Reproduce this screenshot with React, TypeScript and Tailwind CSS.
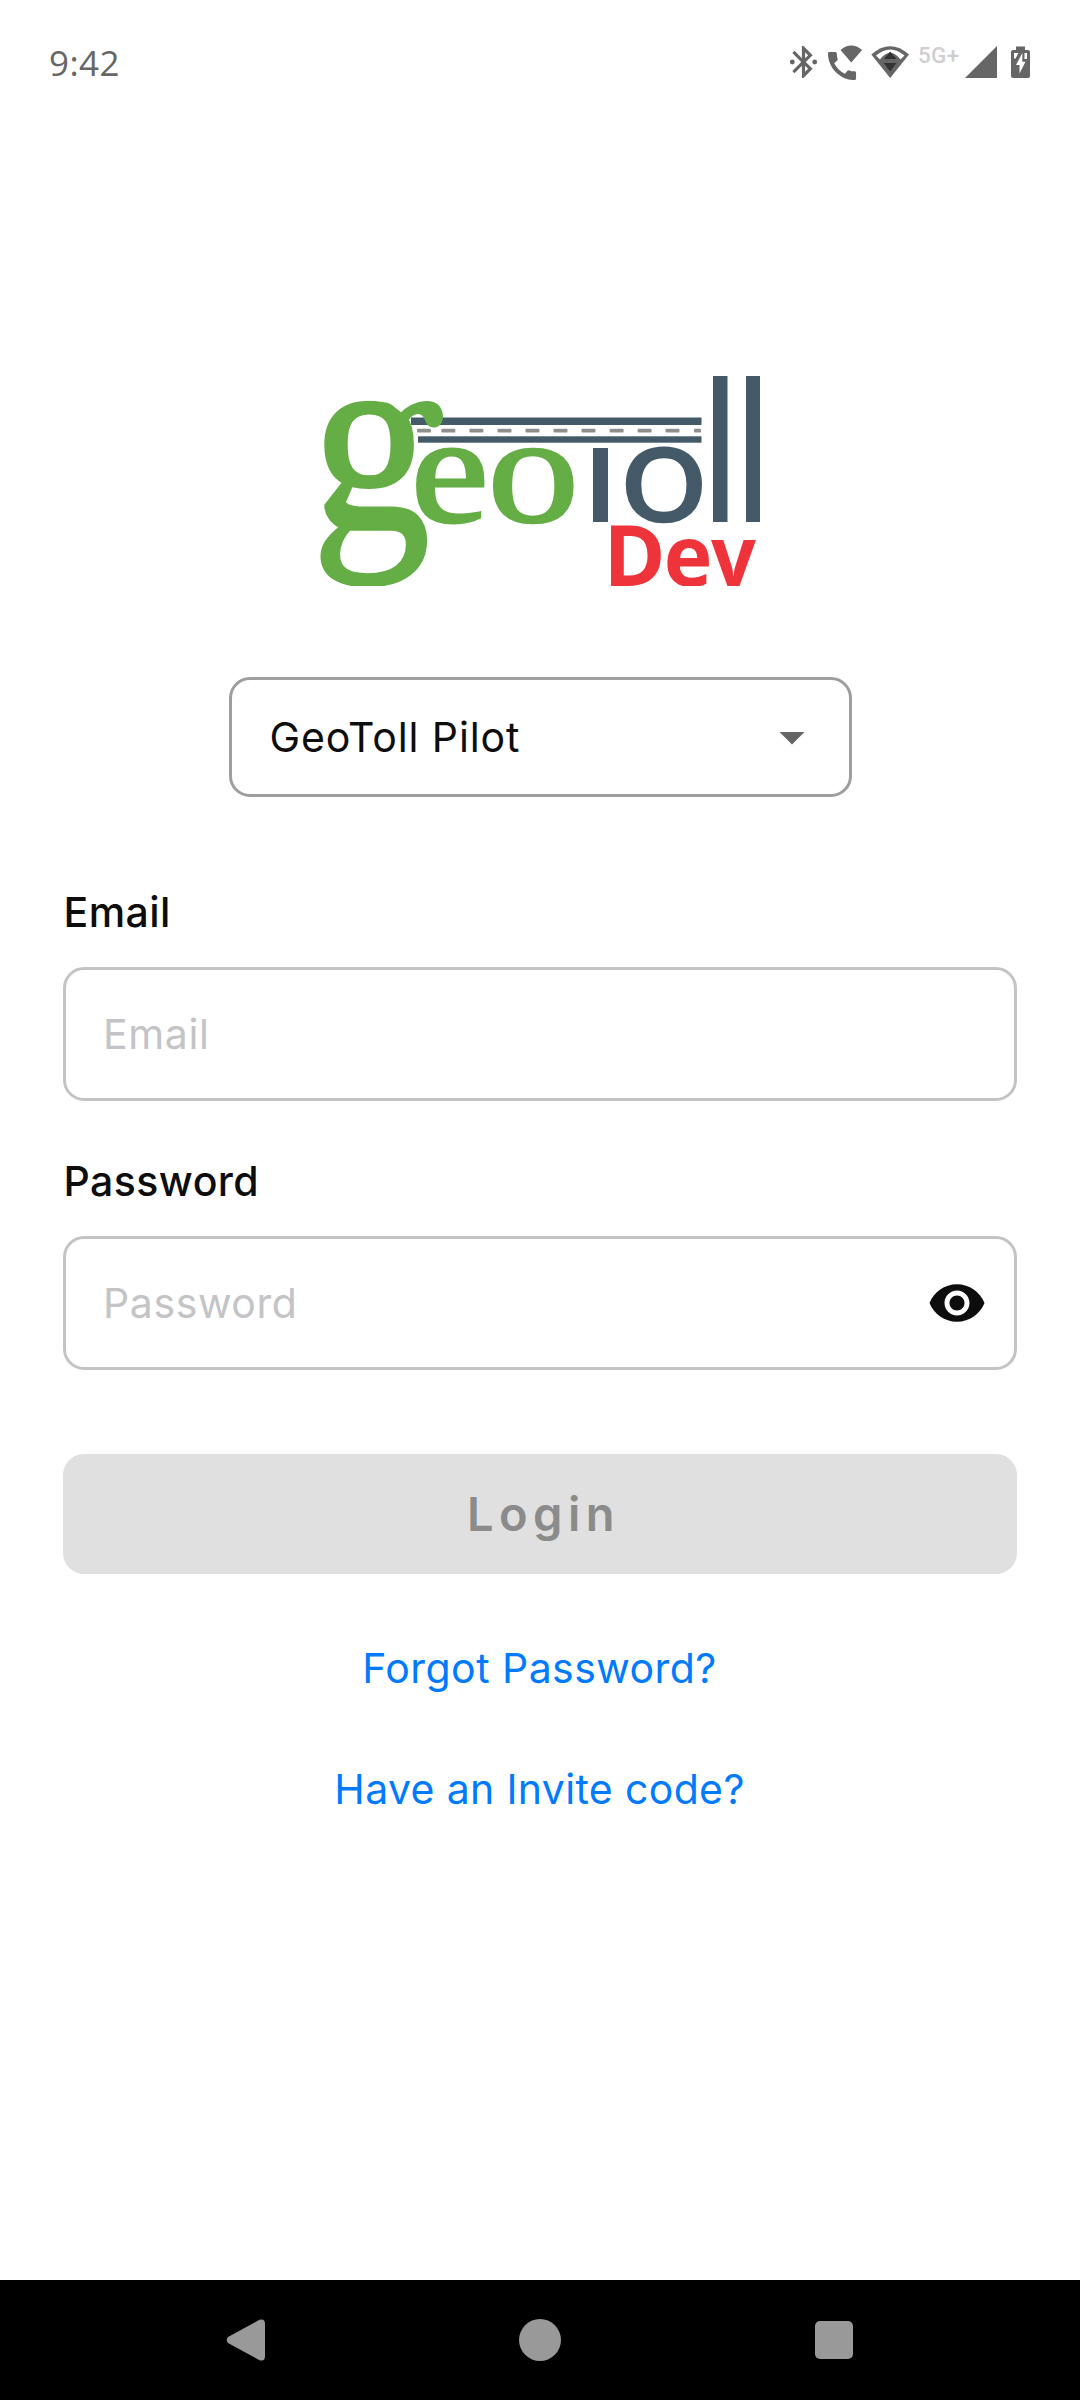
import { MdVisibility } from 'react-icons/md';

const GREEN = '#65ad45';
const SLATE = '#445a69';
const RED = '#ef333a';
const STATUS = '#666666';

const dashes = [424, 448.3, 476.4, 504.5, 532.5, 560.5, 588.5, 616.6, 644.6, 672.5];

function Logo() {
  return (
    <svg className="block h-[210px] w-[440px]" viewBox="320 376 440 210">
      <defs>
        <clipPath id="body">
          <path d="M318 400.500 H386 L402 413 L420 431 L420 440 H590 V590 H318 Z" />
        </clipPath>
      </defs>
      {/* road */}
      <rect x="411" y="417.5" width="290.5" height="7.5" fill={SLATE} />
      <rect x="418" y="436.3" width="283.5" height="6.4" fill={SLATE} />
      {dashes.map((x) => (
        <rect key={x} x={x - 7} y="428.8" width="14" height="3.6" rx="1" fill="#8f8f8f" />
      ))}
      <rect x="694" y="428.8" width="7" height="3.6" rx="1" fill="#8f8f8f" />
      <rect x="593" y="448" width="15" height="74" fill={SLATE} />
      <rect x="713" y="376" width="14.5" height="146" fill={SLATE} />
      <rect x="746" y="376" width="14" height="146" fill={SLATE} />
      {/* ear of the first letter */}
      <path d="M398 415 Q411 401.500 426 401 C438 400 443 409 443 416 C443 423 439 427.500 434 427.500 C428 427.500 426 423 424 418 C421 412 413 413 409 420 Z" fill={GREEN} />
      <g fontSize="100" fontFamily="'Liberation Serif', serif" fill={GREEN} stroke={GREEN} clipPath="url(#body)">
        <text transform="translate(312 528) scale(2.36 2.66)" strokeWidth="1.400">g</text>
        <text transform="translate(411 520.700) scale(1.75 1.54)" strokeWidth="2">e</text>
        <text transform="translate(487.500 520.700) scale(1.83 1.54)" strokeWidth="1.700">o</text>
      </g>
      <text transform="translate(619.1 521) scale(1.49 1.34)" fontSize="100" fontFamily="'Open Sans', sans-serif" fill={SLATE} stroke={SLATE} strokeWidth="2">o</text>
      <g fontSize="84" fontWeight="700" fontFamily="'Open Sans', sans-serif" fill={RED}>
        <text x="603.5" y="586">D</text>
        <text transform="translate(663.7 586) scale(0.98 1)">e</text>
        <text transform="translate(711 586) scale(0.94 1)">v</text>
      </g>
    </svg>
  );
}

function StatusBar() {
  return (
    <div className="flex h-[124px] items-center justify-between pr-[49px] pl-[49px]">
      <span className="pt-[2px] font-['Open_Sans',sans-serif] text-[35px] leading-[48px] tracking-[0.4px] text-[#666666]">9:42</span>
      <div className="flex h-9 items-start">
        <svg className="h-9 w-[30px]" viewBox="789 44 30 36" fill={STATUS}>
          <g transform="translate(784.3 42.8) scale(1.6)">
            <path d="M17.710 7.710L12 2h-1v7.590L6.410 5 5 6.410 10.590 12 5 17.590 6.410 19 11 14.410V22h1l5.710-5.710-4.300-4.290 4.300-4.290zM13 5.830l1.880 1.880L13 9.590V5.830zm1.880 10.460L13 18.170v-3.760l1.880 1.880z" />
            <circle cx="5" cy="12" r="1.5" />
            <circle cx="19" cy="12" r="1.5" />
          </g>
        </svg>
        <svg className="ml-2 h-9 w-9" viewBox="827 44 36 36" fill={STATUS}>
          <g transform="translate(823.3 47.3) scale(1.56)">
            <path d="M20.010 15.380c-1.230 0-2.420-.2-3.530-.56-.35-.12-.74-.03-1.010.24l-1.570 1.970c-2.830-1.350-5.480-3.900-6.890-6.830l1.950-1.660c.27-.28.35-.67.24-1.020-.37-1.110-.56-2.300-.56-3.530 0-.54-.45-.99-.99-.99H4.190C3.650 3 3 3.240 3 3.990 3 13.280 10.730 21 20.010 21c.71 0 .99-.63.99-1.180v-3.450c0-.54-.45-.99-.99-.99z" />
          </g>
          <path d="M840.500 50 Q851.300 41.200 862 50 L851.300 62.500 Z" />
        </svg>
        <svg className="ml-2 h-9 w-[39px]" viewBox="871 44 39 36" fill={STATUS}>
          <path d="M871.300 54.500 Q890.200 38 909 54.500 L890.200 78 Z" />
          <path d="M876 55.500 Q890.200 43.500 904.500 55.500 L900.500 59.500 Q890.200 46 880 59.500 Z" fill="#fff" />
          <path d="M890.200 51.500 L896.500 59 H884 Z M883.800 63 H896.500 L890.200 71.500 Z" fill="#333333" />
        </svg>
        <span className="ml-[8px] w-[43px] font-['Roboto',sans-serif] text-[22.5px] leading-[23px] font-medium tracking-[0.3px] text-[#cfcfcf]">5G+</span>
        <svg className="ml-[3px] h-9 w-[34px]" viewBox="964 44 34 36" fill={STATUS}>
          <path d="M965 78 L997 46 V78 Z" />
        </svg>
        <svg className="ml-3 h-9 w-[21px]" viewBox="1010 44 21 36" fill={STATUS}>
          <path d="M1016 46.500 H1025 V50 H1028 Q1030 50 1030 52 V76 Q1030 78 1028 78 H1013 Q1011 78 1011 76 V52 Q1011 50 1013 50 H1016 Z" />
          <path d="M1014 53 H1018.500 L1015.500 58.500 H1014 Z M1024.500 53 H1027 V59 H1024.500 Z" fill="#fff" />
          <path d="M1022.300 53 L1016 65 H1019.500 V73.500 L1025.500 61.800 H1022.300 Z" fill="#fff" />
        </svg>
      </div>
    </div>
  );
}

function Field({ label, children }: { label: string; children?: React.ReactNode }) {
  return (
    <div className="flex flex-col gap-[30px]">
      <label className="pl-[0.5px] text-[41px] leading-[50px] font-medium tracking-[0.45px] text-[#0d0d0d]">{label}</label>
      <div className="flex h-[134px] items-center justify-between rounded-[21px] border-[3px] border-[#c4c4c6] pr-[27px] pl-[37px]">
        <span className="text-[41px] leading-[50px] tracking-[0.6px] text-[#c4c4c6]">{label}</span>
        {children}
      </div>
    </div>
  );
}

function NavBar() {
  return (
    <div className="flex h-[120px] items-center justify-between bg-black px-[225px]">
      <svg className="h-[42px] w-[42px]" viewBox="0 0 42 42" fill="#999999">
        <path d="M3 18 L34.500 0.800 Q40 -1 40 5 V37 Q40 43 34.500 41.200 L3 24 Q0.500 21 3 18 Z" />
      </svg>
      <div className="size-[42px] rounded-full bg-[#999999]" />
      <div className="flex size-[42px] items-center justify-center">
        <div className="size-[38px] rounded-[5px] bg-[#999999]" />
      </div>
    </div>
  );
}

export default function App() {
  return (
    <div className="flex h-[2400px] w-[1080px] flex-col overflow-hidden bg-white font-['Inter',sans-serif]">
      <StatusBar />
      <main className="flex flex-1 flex-col px-[63px] pt-[252px]">
        <div className="flex justify-center">
          <Logo />
        </div>
        <div className="mt-[91px] flex h-[120px] w-[623px] items-center justify-between self-center rounded-[21px] border-[3px] border-[#9e9e9e] pr-[44px] pl-[38px]">
          <span className="text-[41px] leading-[50px] tracking-[0.9px] text-[#0d0d0d]">GeoToll Pilot</span>
          <svg className="mt-[2px] h-[13px] w-[26px]" viewBox="0 0 26 13">
            <path d="M0.500 0 H25.500 L13 12.500 Z" fill="#666666" />
          </svg>
        </div>
        <div className="mt-[90px] flex flex-col gap-[55px]">
          <Field label="Email" />
          <Field label="Password">
            <MdVisibility className="size-[60px] text-[#0d0d0d]" />
          </Field>
        </div>
        <button className="mt-[84px] h-[120px] rounded-[21px] bg-[#e0e0e0] pl-[7px] text-[47px] leading-[56px] font-semibold tracking-[5.5px] text-[#8b8b8b]">Login</button>
        <div className="mt-[69px] flex flex-col items-center gap-[71px] pr-px text-[41px] leading-[50px] text-[#007aff]">
          <a className="tracking-[0.45px]">Forgot Password?</a>
          <a className="tracking-[0.35px]">Have an Invite code?</a>
        </div>
      </main>
      <NavBar />
    </div>
  );
}
